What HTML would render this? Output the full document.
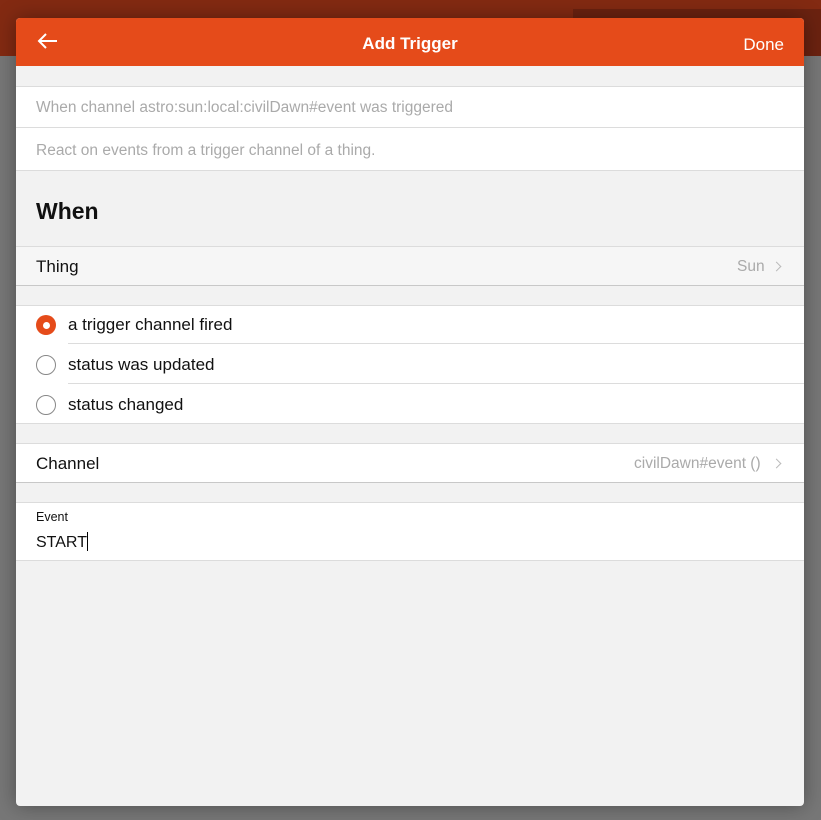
<!DOCTYPE html>
<html><head><style>
*{margin:0;padding:0;box-sizing:border-box}
body{width:821px;height:820px;overflow:hidden;background:#777;font-family:"Liberation Sans",sans-serif;position:relative}
.top{position:absolute;left:0;top:0;width:821px;height:56px;background:#832a12}
.topr{position:absolute;left:573px;top:9px;width:248px;height:47px;background:#6b2210}
.modal{position:absolute;left:16px;top:18px;width:788px;height:788px;background:#f2f2f2;border-radius:4px;overflow:hidden;box-shadow:0 0 20px rgba(0,0,0,.35)}
.hdr{position:absolute;left:0;top:0;width:788px;height:48px;background:#e54b1a;color:#fff}
.abs{position:absolute}
.row{position:absolute;left:0;width:788px;background:#fff}
.t{position:absolute;left:20px;font-size:17px;color:#111;white-space:nowrap}
.g{color:#aaa;font-size:15.5px}
.line{position:absolute;height:1px;background:#dcdcdc}
.radio{position:absolute;left:20px;width:20px;height:20px;border:1.5px solid #888;border-radius:50%}
.chev{position:absolute;width:7px;height:7px;border-right:1.5px solid #bbb;border-top:1.5px solid #bbb;transform:rotate(45deg)}
</style></head><body>
<div class="top"></div><div class="topr"></div>
<div class="modal">
 <div class="hdr">
  <svg class="abs" style="left:20px;top:14px" width="24" height="20" viewBox="0 0 24 20"><path d="M3 9H21M10 2L3 9L10 16" stroke="#fff" stroke-width="2" fill="none"/></svg>
  <div class="abs" style="left:0;width:788px;top:16px;text-align:center;font-size:17px;font-weight:bold">Add Trigger</div>
  <div class="abs" style="right:20px;top:17px;font-size:17px">Done</div>
 </div>
 <div class="line" style="left:0;top:68px;width:788px"></div>
 <div class="row" style="top:69px;height:83px"></div>
 <div class="t g" style="top:81px">When channel astro:sun:local:civilDawn#event was triggered</div>
 <div class="line" style="left:0;top:109px;width:788px"></div>
 <div class="t g" style="top:124px">React on events from a trigger channel of a thing.</div>
 <div class="line" style="left:0;top:152px;width:788px"></div>
 <div class="t" style="top:180px;font-size:23px;font-weight:bold">When</div>
 <div class="line" style="left:0;top:228px;width:788px"></div>
 <div class="row" style="top:229px;height:38px;background:#f6f6f6"></div>
 <div class="t" style="top:239px">Thing</div>
 <div class="t g" style="left:721px;top:240px">Sun</div>
 <div class="chev" style="left:757px;top:245px"></div>
 <div class="line" style="left:0;top:267px;width:788px;background:#c8c8c8"></div>
 <div class="line" style="left:0;top:287px;width:788px"></div>
 <div class="row" style="top:288px;height:117px"></div>
 <div class="abs" style="left:20px;top:297px;width:20px;height:20px;border-radius:50%;background:#e54b1a"><div class="abs" style="left:6.5px;top:6.5px;width:7px;height:7px;border-radius:50%;background:#fff"></div></div>
 <div class="t" style="left:52px;top:297px">a trigger channel fired</div>
 <div class="line" style="left:52px;top:325px;width:736px"></div>
 <div class="radio" style="top:337px"></div>
 <div class="t" style="left:52px;top:337px">status was updated</div>
 <div class="line" style="left:52px;top:365px;width:736px"></div>
 <div class="radio" style="top:377px"></div>
 <div class="t" style="left:52px;top:377px">status changed</div>
 <div class="line" style="left:0;top:405px;width:788px"></div>
 <div class="line" style="left:0;top:425px;width:788px"></div>
 <div class="row" style="top:426px;height:38px"></div>
 <div class="t" style="top:436px">Channel</div>
 <div class="t g" style="left:618px;top:437px">civilDawn#event ()</div>
 <div class="chev" style="left:757px;top:442px"></div>
 <div class="line" style="left:0;top:464px;width:788px;background:#c8c8c8"></div>
 <div class="line" style="left:0;top:484px;width:788px"></div>
 <div class="row" style="top:485px;height:57px"></div>
 <div class="t" style="top:492px;font-size:12.5px">Event</div>
 <div class="t" style="top:514px;font-size:16px">START<span style="display:inline-block;width:1.5px;height:19px;background:#000;vertical-align:-4px"></span></div>
 <div class="line" style="left:0;top:542px;width:788px"></div>
</div>
</body></html>
